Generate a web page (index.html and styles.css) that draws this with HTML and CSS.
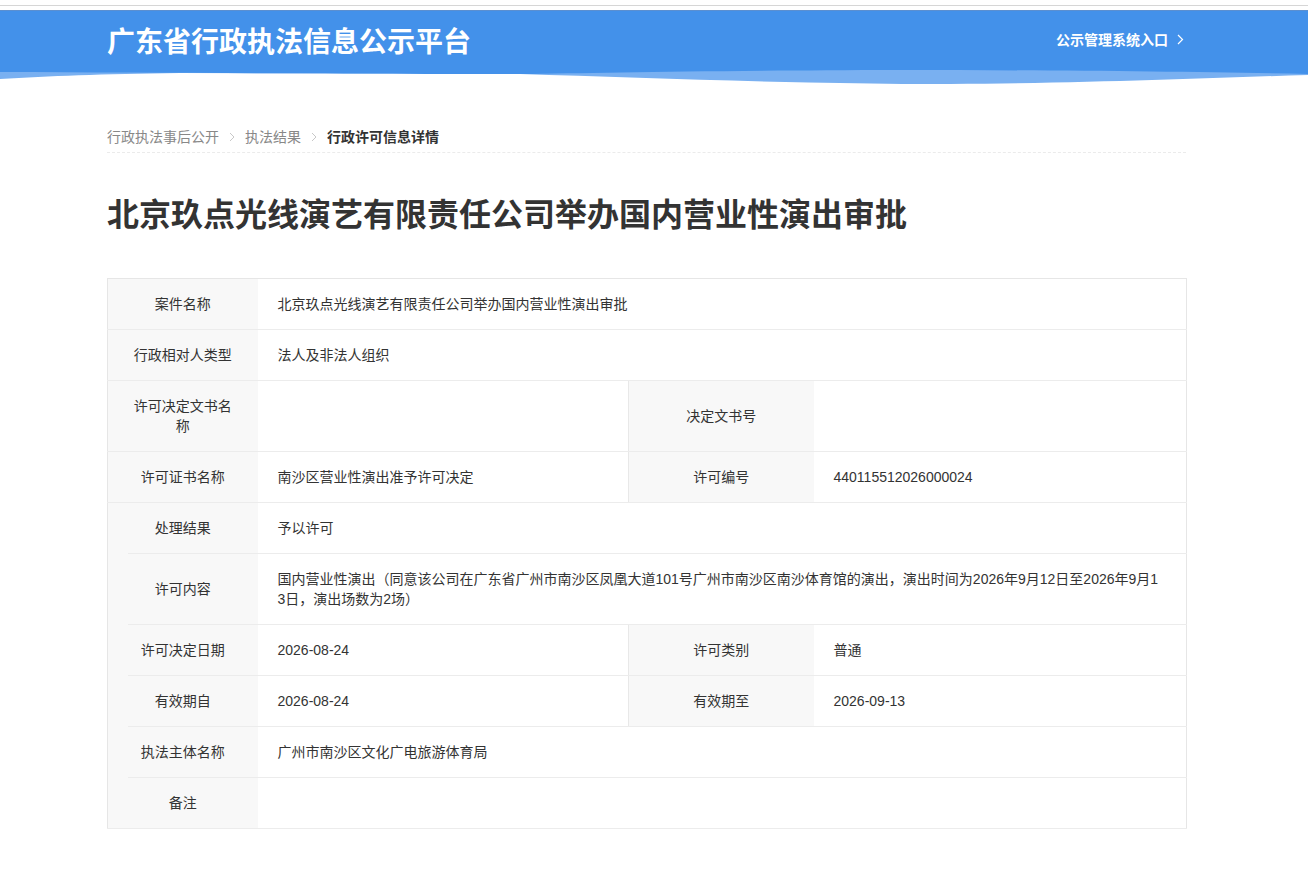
FILE: index.html
```html
<!DOCTYPE html>
<html lang="zh-CN">
<head>
<meta charset="utf-8">
<title>广东省行政执法信息公示平台</title>
<link rel="stylesheet" href="styles.css">
</head>
<body>
<div class="topline"></div>
<header class="header">
  <div class="container header-inner">
    <h1 class="site-title">广东省行政执法信息公示平台</h1>
    <a class="entry" href="#">公示管理系统入口<svg class="entry-arrow" width="7" height="11" viewBox="0 0 7 11"><polyline points="1,1 5.5,5.5 1,10" fill="none" stroke="#fff" stroke-width="1.2"/></svg></a>
  </div>
</header>
<svg class="wave" viewBox="0 0 1308 16" preserveAspectRatio="none">
  <path d="M0,0 L0,9 C50,6 100,4 180,3 L520,4 C650,8 800,14 950,14 C1100,13 1200,8 1308,5 L1308,0 Z" fill="#79b0f1"/>
  <path d="M0,0 L0,2 C200,3 400,4 520,4 C600,3 700,0.5 900,0 C1050,0 1200,2 1308,4 L1308,0 Z" fill="#4391ea"/>
</svg>
<main class="container">
  <nav class="crumbs">
    <a href="#" class="crumb">行政执法事后公开</a>
    <svg class="sep" width="6" height="10" viewBox="0 0 6 10"><polyline points="1,1 5,5 1,9" fill="none" stroke="#c8c8c8" stroke-width="1"/></svg>
    <a href="#" class="crumb">执法结果</a>
    <svg class="sep" width="6" height="10" viewBox="0 0 6 10"><polyline points="1,1 5,5 1,9" fill="none" stroke="#c8c8c8" stroke-width="1"/></svg>
    <span class="crumb current">行政许可信息详情</span>
  </nav>
  <h2 class="page-title">北京玖点光线演艺有限责任公司举办国内营业性演出审批</h2>
  <table class="detail">
    <colgroup><col class="c1"><col class="c2"><col class="c3"><col class="c4"></colgroup>
    <tbody>
      <tr><td class="label">案件名称</td><td class="value" colspan="3">北京玖点光线演艺有限责任公司举办国内营业性演出审批</td></tr>
      <tr><td class="label">行政相对人类型</td><td class="value" colspan="3">法人及非法人组织</td></tr>
      <tr><td class="label">许可决定文书名称</td><td class="value"></td><td class="label label2">决定文书号</td><td class="value"></td></tr>
      <tr><td class="label">许可证书名称</td><td class="value">南沙区营业性演出准予许可决定</td><td class="label label2">许可编号</td><td class="value">440115512026000024</td></tr>
      <tr class="inset"><td class="label">处理结果</td><td class="value" colspan="3">予以许可</td></tr>
      <tr class="inset"><td class="label">许可内容</td><td class="value long" colspan="3">国内营业性演出（同意该公司在广东省广州市南沙区凤凰大道101号广州市南沙区南沙体育馆的演出，演出时间为2026年9月12日至2026年9月13日，演出场数为2场）</td></tr>
      <tr class="inset"><td class="label">许可决定日期</td><td class="value">2026-08-24</td><td class="label label2">许可类别</td><td class="value">普通</td></tr>
      <tr class="inset"><td class="label">有效期自</td><td class="value">2026-08-24</td><td class="label label2">有效期至</td><td class="value">2026-09-13</td></tr>
      <tr class="inset"><td class="label">执法主体名称</td><td class="value" colspan="3">广州市南沙区文化广电旅游体育局</td></tr>
      <tr><td class="label">备注</td><td class="value" colspan="3"></td></tr>
    </tbody>
  </table>
</main>
</body>
</html>
```
FILE: styles.css
```css
* { box-sizing: border-box; }
html, body {
  margin: 0;
  padding: 0;
  background: #fff;
  font-family: "Liberation Sans", "Noto Sans CJK SC", sans-serif;
  color: #333;
}
.container {
  width: 1079px;
  margin-left: 107px;
}
.topline {
  height: 10px;
  padding-top: 5px;
}
.topline::before {
  content: "";
  display: block;
  height: 1px;
  background: #d6d6d6;
}
.header {
  background: #4391ea;
  height: 60px;
  border-top: 1px solid #5b8fd0;
}
.header-inner {
  height: 59px;
  display: flex;
  align-items: center;
  justify-content: space-between;
}
.site-title {
  margin: 4px 0 0;
  font-size: 28px;
  line-height: 36px;
  font-weight: 700;
  color: #fff;
}
.entry {
  display: flex;
  align-items: center;
  gap: 9px;
  font-size: 14px;
  line-height: 20px;
  font-weight: 700;
  color: #fff;
  text-decoration: none;
  margin: 0 2px 2px 0;
}
.wave {
  display: block;
  width: 100%;
  height: 16px;
}
.crumbs {
  margin-top: 41px;
  display: flex;
  align-items: center;
  gap: 10px;
  font-size: 14px;
  line-height: 20px;
  padding-bottom: 5px;
  border-bottom: 1px dashed #ebebeb;
}
.crumb {
  color: #888;
  text-decoration: none;
}
.crumb.current {
  color: #333;
  font-weight: 700;
}
.page-title {
  margin: 40px 0 0;
  font-size: 32px;
  line-height: 44px;
  font-weight: 700;
  color: #333;
}
.detail {
  margin-top: 41px;
  width: 1079px;
  table-layout: fixed;
  border-collapse: collapse;
  border: 1px solid #e6e6e6;
  font-size: 14px;
}
.c1 { width: 150px; }
.c2 { width: 371px; }
.c3 { width: 185px; }
.c4 { width: 373px; }
.detail td {
  padding: 15px 20px;
  line-height: 20px;
  border-bottom: 1px solid #ececec;
  vertical-align: middle;
  color: #333;
}
.detail .label {
  text-align: center;
  background: #f8f8f8;
}
.detail .label2 {
  border-left: 1px solid #e8e8e8;
}
.detail .value {
  background: #fff;
}
.detail .long {
  word-break: break-all;
  padding-right: 25px;
}
.detail .inset .label:first-child {
  border-bottom-style: hidden;
  background:
    linear-gradient(#ececec, #ececec) right bottom / calc(100% - 20px) 1px no-repeat,
    #f8f8f8;
}
```
